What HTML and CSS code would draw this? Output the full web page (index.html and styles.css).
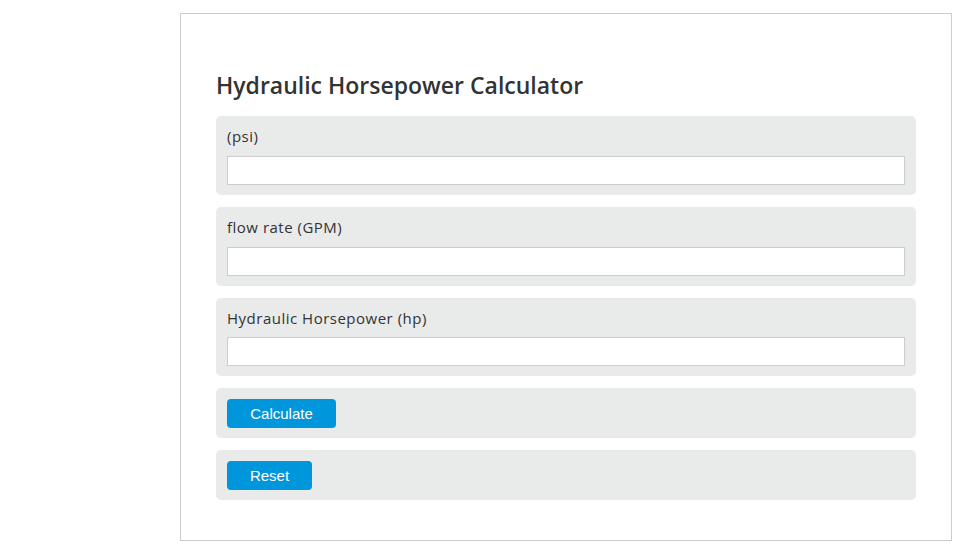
FILE: index.html
```html
<!DOCTYPE html>
<html>
<head>
<meta charset="utf-8">
<link rel="stylesheet" href="styles.css">
</head>
<body>
<div class="calc">
  <h2 class="title">Hydraulic Horsepower Calculator</h2>
  <div class="row">
    <label class="label">(psi)</label>
    <input class="field" type="text">
  </div>
  <div class="row">
    <label class="label">flow rate (GPM)</label>
    <input class="field" type="text">
  </div>
  <div class="row">
    <label class="label">Hydraulic Horsepower (hp)</label>
    <input class="field" type="text">
  </div>
  <div class="row row-btn">
    <button class="btn btn-calc">Calculate</button>
  </div>
  <div class="row row-btn">
    <button class="btn btn-reset">Reset</button>
  </div>
</div>
</body>
</html>
```

FILE: styles.css
```css
html, body {
  margin: 0;
  padding: 0;
  background: #fff;
}
body {
  font-family: "Open Sans", "DejaVu Sans", sans-serif;
  color: #333;
}
.calc {
  box-sizing: border-box;
  width: 772px;
  height: 528px;
  margin: 13px 0 0 180px;
  border: 1px solid #cccccc;
  padding: 58px 35px 0 35px;
}
.title {
  margin: 0 0 18px 0;
  font-size: 23px;
  font-weight: 600;
  color: #333;
  line-height: 26px;
}
.row {
  background: #e9eaea;
  border-radius: 5px;
  padding: 11px 11px 10px 11px;
  margin-bottom: 12px;
  display: flex;
  flex-direction: column;
}
.label {
  font-size: 15px;
  line-height: 19.75px;
  letter-spacing: 0.5px;
  color: #333;
  margin-bottom: 9px;
}
.field {
  box-sizing: border-box;
  height: 29px;
  width: 100%;
  border: 1px solid #cdcdcd;
  background: #fff;
  margin: 0;
  padding: 0 6px;
}
.row-btn {
  flex-direction: row;
  padding: 11px 11px 10px 11px;
}
.btn {
  font-family: "Liberation Sans", Arial, sans-serif;
  font-size: 15px;
  color: #fff;
  background: #0096db;
  border: none;
  border-radius: 4px;
  height: 29px;
  padding: 0;
}
.btn-calc { width: 109px; }
.btn-reset { width: 85px; }
```
